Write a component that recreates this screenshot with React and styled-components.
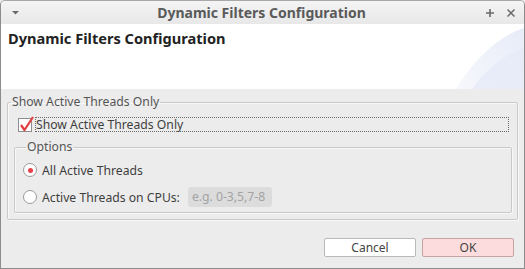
import React from "react";
import styled, { createGlobalStyle } from "styled-components";

const GlobalStyle = createGlobalStyle`
  html, body {
    margin: 0;
    padding: 0;
    background: #ececec;
  }
  body {
    font-family: "Noto Sans", "DejaVu Sans", sans-serif;
    font-size: 12.2px;
    color: #3e3e3e;
  }
`;

const Window = styled.div`
  width: 525px;
  height: 269px;
  box-sizing: border-box;
  border: 1px solid #8c8c8c;
  border-top-color: #a8a8a8;
  border-radius: 5px 5px 0 0;
  background: #ececec;
  display: flex;
  flex-direction: column;
  overflow: hidden;
`;

const TitleBar = styled.div`
  height: 23px;
  flex: none;
  display: grid;
  grid-template-columns: 40px 1fr 40px;
  align-items: center;
  background: linear-gradient(#f4f4f4, #e8e8e8);
  padding: 0 9px 0 7px;
`;

const Title = styled.div`
  text-align: center;
  font-weight: bold;
  font-size: 14px;
  color: #5a5a5a;
`;

const TitleButtons = styled.div`
  display: flex;
  justify-content: flex-end;
  gap: 13px;
`;

const Header = styled.div`
  position: relative;
  height: 65px;
  flex: none;
  background: #fff;
  padding: 5px 7px 0;
  box-sizing: border-box;
  overflow: hidden;
`;

const HeaderTitle = styled.div`
  font-weight: bold;
  font-size: 14.6px;
  line-height: 18px;
  color: #222;
`;

const Swoosh = styled.svg`
  position: absolute;
  right: 0;
  bottom: 0;
`;

const Body = styled.div`
  flex: 1;
  display: flex;
  flex-direction: column;
  padding: 5px 6px 11px 6px;
`;

const Group = styled.fieldset`
  margin: 0;
  padding: ${(p) => p.$pad};
  border: 1px solid #c9c9c9;
  border-radius: 2px;
  box-shadow: 1px 1px 0 #f8f8f8, inset 1px 1px 0 #f8f8f8;
  display: flex;
  flex-direction: column;
  min-width: 0;
`;

const Legend = styled.legend`
  padding: 0 1px;
  margin-left: ${(p) => p.$offset}px;
  line-height: 16px;
  color: #555;
`;

const CheckRow = styled.label`
  display: flex;
  align-items: center;
  height: 15px;
  margin: 7px 4px 7px 10px;
  gap: 3px;
`;

const CheckBox = styled.span`
  position: relative;
  width: 12px;
  height: 12px;
  border: 1px solid #8e8e8e;
  background: #fff;
  flex: none;
`;

const CheckMark = styled.svg`
  position: absolute;
  left: 0;
  top: -4px;
`;

const FocusLabel = styled.span`
  flex: 1;
  height: 13px;
  line-height: 13px;
  border: 1px dotted #6a6a6a;
`;

const RadioRow = styled.label`
  display: flex;
  align-items: center;
  gap: 5px;
  height: ${(p) => p.$h}px;
  margin-top: ${(p) => p.$mt}px;
`;

const Radio = styled.span`
  width: 12px;
  height: 12px;
  border-radius: 50%;
  border: 1px solid #9a9a9a;
  background: #fff;
  display: flex;
  align-items: center;
  justify-content: center;
  flex: none;
  &::after {
    content: "";
    width: 5px;
    height: 5px;
    border-radius: 50%;
    background: ${(p) => (p.$checked ? "#e8414a" : "transparent")};
  }
`;

const CpuInput = styled.span`
  margin-left: 3px;
  width: 84px;
  height: 20px;
  line-height: 20px;
  border-radius: 3px;
  background: #dcdcdc;
  color: #a3a3a3;
  padding-left: 4px;
  box-sizing: border-box;
`;

const Footer = styled.div`
  margin-top: auto;
  display: flex;
  justify-content: flex-end;
  gap: 6px;
  padding-right: 4px;
`;

const Button = styled.button`
  width: 92px;
  height: 19px;
  padding: 0;
  font: inherit;
  font-size: 12px;
  color: #444;
  border-radius: 2px;
  border: 1px solid ${(p) => (p.$primary ? "#c9a3a3" : "#b9b9b9")};
  background: ${(p) => (p.$primary ? "#fcdcdc" : "#fff")};
`;

export default function App() {
  return (
    <>
      <GlobalStyle />
      <Window>
        <TitleBar>
          <svg width="8" height="4" viewBox="0 0 8 4" style={{ marginLeft: 4 }}>
            <path d="M0 0 H7 L3.5 3.5 Z" fill="#6a6a6a" />
          </svg>
          <Title>Dynamic Filters Configuration</Title>
          <TitleButtons>
            <svg width="8" height="8" viewBox="0 0 8 8">
              <path d="M4 0 V8 M0 4 H8" stroke="#6a6a6a" strokeWidth="1.6" />
            </svg>
            <svg width="8" height="8" viewBox="0 0 8 8">
              <path d="M0.5 0.5 L7.5 7.5 M7.5 0.5 L0.5 7.5" stroke="#6a6a6a" strokeWidth="1.5" />
            </svg>
          </TitleButtons>
        </TitleBar>
        <Header>
          <HeaderTitle>Dynamic Filters Configuration</HeaderTitle>
          <Swoosh width="80" height="65" viewBox="0 0 80 65">
            <defs>
              <linearGradient id="sw" x1="0" y1="1" x2="1" y2="0">
                <stop offset="0" stopColor="#f4f6fc" />
                <stop offset="1" stopColor="#e2e7f6" />
              </linearGradient>
            </defs>
            <path d="M12 65 C30 35 55 12 80 4 V65 Z" fill="url(#sw)" opacity="0.8" />
            <path d="M28 65 C42 45 62 30 80 24 V65 Z" fill="#e6eaf7" opacity="0.8" />
          </Swoosh>
        </Header>
        <Body>
          <Group $pad="0 4px 6px 0">
            <Legend $offset={3}>Show Active Threads Only</Legend>
            <CheckRow>
              <CheckBox>
                <CheckMark width="16" height="18" viewBox="0 0 16 18">
                  <path d="M2 10 L5.5 15 L14 2" fill="none" stroke="#e43d3d" strokeWidth="2.2" strokeLinejoin="round" />
                </CheckMark>
              </CheckBox>
              <FocusLabel>Show Active Threads Only</FocusLabel>
            </CheckRow>
            <Group $pad="0 5px 5px 8px" style={{ marginLeft: 6, marginRight: 1 }}>
              <Legend $offset={3}>Options</Legend>
              <RadioRow $h={14} $mt={8}>
                <Radio $checked />
                All Active Threads
              </RadioRow>
              <RadioRow $h={20} $mt={10}>
                <Radio />
                Active Threads on CPUs:
                <CpuInput>e.g. 0-3,5,7-8</CpuInput>
              </RadioRow>
            </Group>
          </Group>
          <Footer>
            <Button>Cancel</Button>
            <Button $primary>OK</Button>
          </Footer>
        </Body>
      </Window>
    </>
  );
}
